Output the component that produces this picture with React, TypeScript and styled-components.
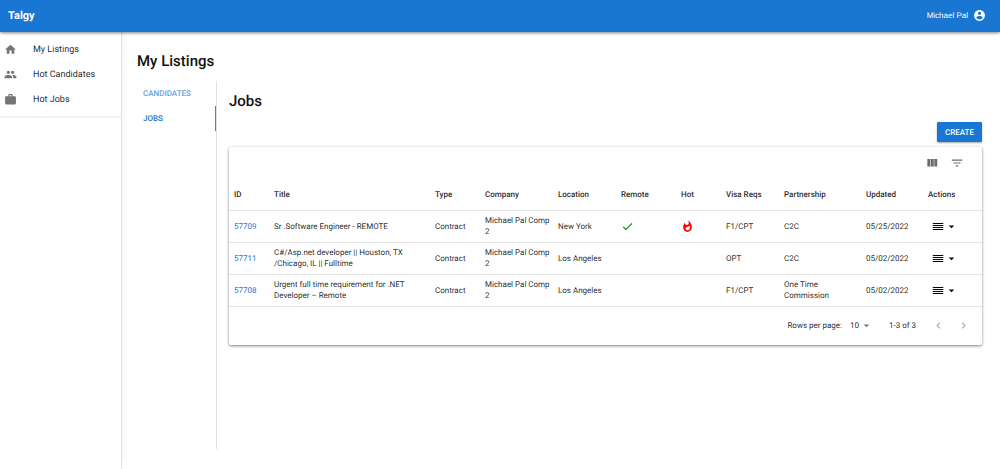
import React from "react";
import styled, { createGlobalStyle } from "styled-components";

const GlobalStyle = createGlobalStyle`
  *, *::before, *::after { box-sizing: border-box; }
  body {
    margin: 0;
    background: #fff;
    color: rgba(0, 0, 0, 0.87);
    font-family: Roboto, "Liberation Sans", sans-serif;
    font-size: 8px;
    text-rendering: geometricPrecision;
  }
  button, select { font-family: inherit; text-rendering: inherit; }
`;

const Page = styled.div`
  display: flex;
  flex-direction: column;
  min-height: 100vh;
`;

const AppBar = styled.header`
  display: flex;
  align-items: center;
  justify-content: space-between;
  height: 32px;
  padding: 0 14px 1px 8px;
  background: #1976d2;
  color: #fff;
  box-shadow: 0 1px 3px rgba(0, 0, 0, 0.5);
  z-index: 1;
`;

const Brand = styled.a`
  color: inherit;
  font-size: 11px;
  font-weight: 700;
  text-decoration: none;
`;

const Account = styled.button`
  display: flex;
  align-items: center;
  gap: 5px;
  padding: 0;
  border: 0;
  background: none;
  color: inherit;
  font-family: "Liberation Sans", Arial, sans-serif;
  font-size: 8px;
`;

const Icon = styled.svg<{ $size: number; $color?: string }>`
  display: block;
  flex: none;
  width: ${(p) => p.$size}px;
  height: ${(p) => p.$size}px;
  fill: ${(p) => p.$color ?? "currentColor"};
`;

const Body = styled.div`
  display: flex;
  flex: 1;
`;

const Sidebar = styled.nav`
  flex: none;
  width: 122px;
  padding-top: 5px;
  border-right: 1px solid #e0e0e0;
`;

const NavList = styled.ul`
  margin: 0;
  padding: 0 0 4px;
  list-style: none;
  border-bottom: 2px solid #f2f2f2;
`;

const NavLink = styled.a`
  display: flex;
  align-items: center;
  gap: 16px;
  height: 25px;
  padding-left: 4px;
  color: inherit;
  font-size: 9px;
  text-decoration: none;
`;

const Main = styled.main`
  flex: 1;
  min-width: 0;
  margin-bottom: 9px;
  padding: 17px 18px 10px 11px;
  border-left: 4px solid #fafafa;
`;

const Heading = styled.h1`
  margin: 0;
  color: #111;
  font-size: 15px;
  font-weight: 500;
  line-height: 24px;
`;

const Content = styled.div`
  display: flex;
  margin-top: 8px;
`;

const Tabs = styled.div`
  display: flex;
  flex: none;
  flex-direction: column;
  width: 80px;
  min-height: 368px;
  border-right: 1px solid #e0e0e0;
`;

const Tab = styled.button<{ $active?: boolean }>`
  height: 25px;
  padding: 0 6px;
  border: 0;
  border-right: 1px solid ${(p) => (p.$active ? "#f44336" : "transparent")};
  background: none;
  color: #1976d2;
  font-size: 8px;
  font-weight: 500;
  text-align: left;
  text-transform: uppercase;
  opacity: ${(p) => (p.$active ? 1 : 0.7)};
`;

const Panel = styled.section`
  flex: 1;
  min-width: 0;
  padding: 8px 0 0 12px;
`;

const PanelHeading = styled.h2`
  margin: 0;
  color: #111;
  font-size: 15px;
  font-weight: 500;
  line-height: 24px;
`;

const Actions = styled.div`
  display: flex;
  justify-content: flex-end;
  margin: 9px 0 5px;
`;

const CreateButton = styled.button`
  height: 20px;
  padding: 0 8px;
  border: 0;
  border-radius: 1px;
  background: #1976d2;
  color: #fff;
  font-size: 8px;
  font-weight: 500;
  text-transform: uppercase;
  box-shadow: 0 1px 2px rgba(0, 0, 0, 0.35);
`;

const Paper = styled.div`
  border-radius: 2px;
  background: #fff;
  box-shadow: 0 1px 3px rgba(0, 0, 0, 0.5);
`;

const Toolbar = styled.div`
  display: flex;
  align-items: center;
  justify-content: flex-end;
  gap: 11px;
  height: 32px;
  padding-right: 18px;
`;

const IconButton = styled.button<{ $muted?: boolean }>`
  padding: 0;
  border: 0;
  background: none;
  color: ${(p) => (p.$muted ? "#a8a8a8" : "#6b6b6b")};
`;

const Table = styled.table`
  width: 100%;
  table-layout: fixed;
  border-collapse: collapse;
`;

const Col = styled.col<{ $width: number }>`
  width: ${(p) => p.$width}px;
`;

const Row = styled.tr<{ $head?: boolean }>`
  height: ${(p) => (p.$head ? 31 : 32)}px;
  border-bottom: 1px solid #e4e4e4;
`;

const HeadCell = styled.th`
  padding: 0 5px;
  font-weight: 500;
  line-height: 11px;
  text-align: left;
`;

const Cell = styled.td`
  padding: 0 0 0 5px;
  line-height: 11px;
`;

const IdLink = styled.a`
  color: #1976d2;
  text-decoration: none;
`;

const MenuButton = styled.button`
  display: flex;
  align-items: center;
  margin-left: 3px;
  padding: 0;
  border: 0;
  background: none;
  color: #000;
`;

const Footer = styled.div`
  display: flex;
  align-items: center;
  justify-content: flex-end;
  height: 38px;
  padding-right: 12px;
`;

const PageSize = styled.label`
  display: flex;
  align-items: center;
  gap: 8px;
`;

const SelectWrap = styled.span`
  display: flex;
  align-items: center;
`;

const Select = styled.select`
  width: 20px;
  height: 14px;
  margin-right: -10px;
  padding: 0 10px 0 0;
  border: 0;
  background: none;
  appearance: none;
  color: inherit;
  font-size: 8px;
`;

const Range = styled.span`
  margin: 0 16px;
`;

const Pager = styled.span`
  display: flex;
  gap: 12px;
`;

const paths = {
  home: "M10 20v-6h4v6h5v-8h3L12 3 2 12h3v8z",
  people:
    "M16 11c1.66 0 2.99-1.34 2.99-3S17.66 5 16 5c-1.66 0-3 1.34-3 3s1.34 3 3 3zm-8 0c1.66 0 2.99-1.34 2.99-3S9.66 5 8 5C6.34 5 5 6.34 5 8s1.34 3 3 3zm0 2c-2.33 0-7 1.17-7 3.5V19h14v-2.5c0-2.33-4.67-3.5-7-3.5zm8 0c-.29 0-.62.02-.97.05 1.16.84 1.97 1.97 1.97 3.45V19h6v-2.5c0-2.33-4.67-3.5-7-3.5z",
  work: "M20 6h-4V4c0-1.11-.89-2-2-2h-4c-1.11 0-2 .89-2 2v2H4c-1.11 0-1.99.89-1.99 2L2 19c0 1.11.89 2 2 2h16c1.11 0 2-.89 2-2V8c0-1.11-.89-2-2-2zm-6 0h-4V4h4v2z",
  account:
    "M12 2C6.48 2 2 6.48 2 12s4.48 10 10 10 10-4.48 10-10S17.52 2 12 2zm0 3c1.66 0 3 1.34 3 3s-1.34 3-3 3-3-1.34-3-3 1.34-3 3-3zm0 14.2c-2.5 0-4.71-1.28-6-3.22.03-1.99 4-3.08 6-3.08 1.99 0 5.97 1.09 6 3.08-1.29 1.94-3.5 3.22-6 3.22z",
  columns: "M10 18h5V5h-5v13zm-6 0h5V5H4v13zM16 5v13h5V5h-5z",
  filter: "M10 18h4v-2h-4v2zM3 6v2h18V6H3zm3 7h12v-2H6v2z",
  check: "M9 16.17L4.83 12l-1.42 1.41L9 19 21 7l-1.41-1.41z",
  fire: "M13.5.67s.74 2.65.74 4.8c0 2.06-1.35 3.73-3.41 3.73-2.07 0-3.63-1.67-3.63-3.73l.03-.36C5.21 7.51 4 10.62 4 14c0 4.42 3.58 8 8 8s8-3.58 8-8C20 8.61 17.41 3.8 13.5.67zM11.71 19c-1.78 0-3.22-1.4-3.22-3.14 0-1.62 1.05-2.76 2.81-3.12 1.77-.36 3.6-1.21 4.62-2.58.39 1.29.59 2.65.59 4.04 0 2.65-2.15 4.8-4.8 4.8z",
  menu: "M3 6.857h18v1.714H3zM3 10.286h18V12H3zM3 13.714h18v1.715H3zM3 17.143h18v1.714H3z",
  caret: "M7 10l5 5 5-5z",
  left: "M15.41 7.41L14 6l-6 6 6 6 1.41-1.41L10.83 12z",
  right: "M10 6L8.59 7.41 13.17 12l-4.58 4.59L10 18l6-6z",
};

function Glyph({ name, size, color }: { name: keyof typeof paths; size: number; color?: string }) {
  return (
    <Icon viewBox="0 0 24 24" $size={size} $color={color} aria-hidden="true">
      <path d={paths[name]} />
    </Icon>
  );
}

const nav: { label: string; icon: keyof typeof paths }[] = [
  { label: "My Listings", icon: "home" },
  { label: "Hot Candidates", icon: "people" },
  { label: "Hot Jobs", icon: "work" },
];

const columns = [
  { label: "ID", width: 40 },
  { label: "Title", width: 161 },
  { label: "Type", width: 50 },
  { label: "Company", width: 73 },
  { label: "Location", width: 63 },
  { label: "Remote", width: 60 },
  { label: "Hot", width: 45 },
  { label: "Visa Reqs", width: 58 },
  { label: "Partnership", width: 82 },
  { label: "Updated", width: 62 },
  { label: "Actions", width: 59 },
];

const jobs = [
  {
    id: 57709,
    title: ["Sr .Software Engineer - REMOTE"],
    location: "New York",
    remote: true,
    hot: true,
    visa: "F1/CPT",
    partnership: ["C2C"],
    updated: "05/25/2022",
  },
  {
    id: 57711,
    title: ["C#/Asp.net developer || Houston, TX", "/Chicago, IL || Fulltime"],
    location: "Los Angeles",
    visa: "OPT",
    partnership: ["C2C"],
    updated: "05/02/2022",
  },
  {
    id: 57708,
    title: ["Urgent full time requirement for .NET", "Developer – Remote"],
    location: "Los Angeles",
    visa: "F1/CPT",
    partnership: ["One Time", "Commission"],
    updated: "05/02/2022",
  },
];

function Lines({ items }: { items: string[] }) {
  return (
    <>
      {items.map((text, i) => (
        <React.Fragment key={text}>
          {i > 0 && <br />}
          {text}
        </React.Fragment>
      ))}
    </>
  );
}

export default function App() {
  return (
    <Page>
      <GlobalStyle />
      <AppBar>
        <Brand href="#">Talgy</Brand>
        <Account type="button">
          Michael Pal
          <Glyph name="account" size={13} />
        </Account>
      </AppBar>
      <Body>
        <Sidebar>
          <NavList>
            {nav.map((item) => (
              <li key={item.label}>
                <NavLink href="#">
                  <Glyph name={item.icon} size={13} color="#757575" />
                  {item.label}
                </NavLink>
              </li>
            ))}
          </NavList>
        </Sidebar>
        <Main>
          <Heading>My Listings</Heading>
          <Content>
            <Tabs role="tablist" aria-orientation="vertical">
              <Tab type="button" role="tab" aria-selected="false">
                Candidates
              </Tab>
              <Tab type="button" role="tab" aria-selected="true" $active>
                Jobs
              </Tab>
            </Tabs>
            <Panel>
              <PanelHeading>Jobs</PanelHeading>
              <Actions>
                <CreateButton type="button">Create</CreateButton>
              </Actions>
              <Paper>
                <Toolbar>
                  <IconButton type="button" aria-label="View columns">
                    <Glyph name="columns" size={14} />
                  </IconButton>
                  <IconButton type="button" aria-label="Filter table">
                    <Glyph name="filter" size={14} />
                  </IconButton>
                </Toolbar>
                <Table>
                  <colgroup>
                    {columns.map((c) => (
                      <Col key={c.label} $width={c.width} />
                    ))}
                  </colgroup>
                  <thead>
                    <Row $head>
                      {columns.map((c) => (
                        <HeadCell key={c.label} scope="col">
                          {c.label}
                        </HeadCell>
                      ))}
                    </Row>
                  </thead>
                  <tbody>
                    {jobs.map((job) => (
                      <Row key={job.id}>
                        <Cell>
                          <IdLink href="#">{job.id}</IdLink>
                        </Cell>
                        <Cell>
                          <Lines items={job.title} />
                        </Cell>
                        <Cell>Contract</Cell>
                        <Cell>
                          <Lines items={["Michael Pal Comp", "2"]} />
                        </Cell>
                        <Cell>{job.location}</Cell>
                        <Cell>{job.remote && <Glyph name="check" size={13} color="green" />}</Cell>
                        <Cell>{job.hot && <Glyph name="fire" size={13} color="red" />}</Cell>
                        <Cell>{job.visa}</Cell>
                        <Cell>
                          <Lines items={job.partnership} />
                        </Cell>
                        <Cell>{job.updated}</Cell>
                        <Cell>
                          <MenuButton type="button" aria-label="Row actions">
                            <Glyph name="menu" size={14} />
                            <Glyph name="caret" size={13} />
                          </MenuButton>
                        </Cell>
                      </Row>
                    ))}
                  </tbody>
                </Table>
                <Footer>
                  <PageSize>
                    Rows per page:
                    <SelectWrap>
                      <Select defaultValue="10">
                        <option>10</option>
                      </Select>
                      <Glyph name="caret" size={13} color="#757575" />
                    </SelectWrap>
                  </PageSize>
                  <Range>1-3 of 3</Range>
                  <Pager>
                    <IconButton type="button" $muted aria-label="Previous page">
                      <Glyph name="left" size={13} />
                    </IconButton>
                    <IconButton type="button" $muted aria-label="Next page">
                      <Glyph name="right" size={13} />
                    </IconButton>
                  </Pager>
                </Footer>
              </Paper>
            </Panel>
          </Content>
        </Main>
      </Body>
    </Page>
  );
}
